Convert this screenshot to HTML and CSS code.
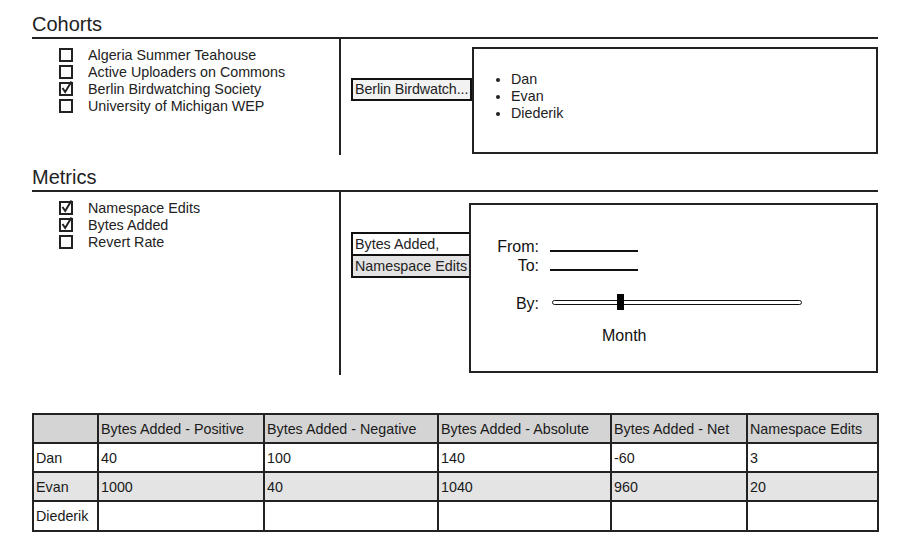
FILE: index.html
```html
<!DOCTYPE html>
<html lang="en">
<head>
  <meta charset="UTF-8">
  <meta name="viewport" content="width=device-width, initial-scale=1.0">
  <title>Cohort Metrics</title>
  <link rel="stylesheet" href="styles.css">
</head>
<body>
  <div class="page">

    <div class="panel cohorts">
      <h2>Cohorts</h2>
      <div class="panel-body">
        <ul class="checklist">
          <li><svg class="box" viewBox="0 0 15 16"><rect x="1" y="2" width="12" height="12"/></svg>Algeria Summer Teahouse</li>
          <li><svg class="box" viewBox="0 0 15 16"><rect x="1" y="2" width="12" height="12"/></svg>Active Uploaders on Commons</li>
          <li><svg class="box" viewBox="0 0 15 16"><rect x="1" y="2" width="12" height="12"/><path d="M3.5 7 L6.2 11 L12.5 0.5"/></svg>Berlin Birdwatching Society</li>
          <li><svg class="box" viewBox="0 0 15 16"><rect x="1" y="2" width="12" height="12"/></svg>University of Michigan WEP</li>
        </ul>
        <div class="panel-right">
          <div class="picked">Berlin Birdwatch...</div>
          <div class="detail">
            <ul class="members">
              <li>Dan</li>
              <li>Evan</li>
              <li>Diederik</li>
            </ul>
          </div>
        </div>
      </div>
    </div>

    <div class="panel metrics">
      <h2>Metrics</h2>
      <div class="panel-body">
        <ul class="checklist">
          <li><svg class="box" viewBox="0 0 15 16"><rect x="1" y="2" width="12" height="12"/><path d="M3.5 7 L6.2 11 L12.5 0.5"/></svg>Namespace Edits</li>
          <li><svg class="box" viewBox="0 0 15 16"><rect x="1" y="2" width="12" height="12"/><path d="M3.5 7 L6.2 11 L12.5 0.5"/></svg>Bytes Added</li>
          <li><svg class="box" viewBox="0 0 15 16"><rect x="1" y="2" width="12" height="12"/></svg>Revert Rate</li>
        </ul>
        <div class="panel-right">
          <div class="picked multi">
            <div class="opt">Bytes Added,</div>
            <div class="opt alt">Namespace Edits</div>
          </div>
          <div class="detail range">
            <div class="field-row first"><span class="label">From:</span><span class="blank"></span></div>
            <div class="field-row"><span class="label">To:</span><span class="blank"></span></div>
            <div class="field-row by">
              <span class="label">By:</span>
              <div class="slider"><div class="thumb"></div></div>
            </div>
            <div class="slider-value">Month</div>
          </div>
        </div>
      </div>
    </div>

    <table class="results">
      <colgroup>
        <col style="width:65px"><col style="width:166px"><col style="width:174px">
        <col style="width:173px"><col style="width:136px"><col style="width:131px">
      </colgroup>
      <tr class="head">
        <td></td>
        <td>Bytes Added - Positive</td>
        <td>Bytes Added - Negative</td>
        <td>Bytes Added - Absolute</td>
        <td>Bytes Added - Net</td>
        <td>Namespace Edits</td>
      </tr>
      <tr>
        <td>Dan</td><td>40</td><td>100</td><td>140</td><td>-60</td><td>3</td>
      </tr>
      <tr class="alt">
        <td>Evan</td><td>1000</td><td>40</td><td>1040</td><td>960</td><td>20</td>
      </tr>
      <tr>
        <td>Diederik</td><td></td><td></td><td></td><td></td><td></td>
      </tr>
    </table>

  </div>
</body>
</html>
```

FILE: styles.css
```css
body {
  font-family: "Liberation Sans", Arial, sans-serif;
  font-size: 14.3px;
  color: #222;
  background-color: #fff;
  margin: 0;
  padding: 0;
}
.page {
  width: 846px;
  padding: 13px 29px 20px 32px;
}
h2 {
  font-size: 20px;
  font-weight: normal;
  line-height: 23px;
  margin: 0;
  padding-bottom: 1px;
  border-bottom: 2px solid #222;
}
.metrics {
  margin-top: 11px;
}
.panel-body {
  display: flex;
}
.checklist {
  list-style: none;
  width: 280px;
  margin: 0;
  padding: 8px 0 0 27px;
  border-right: 2px solid #222;
}
.cohorts .checklist {
  height: 108px;
}
.metrics .checklist {
  height: 175px;
}
.checklist li {
  display: flex;
  align-items: center;
  line-height: 17px;
}
.box {
  width: 15px;
  height: 16px;
  margin-right: 14px;
  margin-top: -2px;
  fill: none;
  stroke: #222;
  stroke-width: 2;
}
.panel-right {
  display: flex;
  align-items: flex-start;
  padding-left: 10px;
}
.cohorts .panel-right {
  padding-top: 8px;
}
.metrics .panel-right {
  padding-top: 11px;
}
.picked {
  box-sizing: border-box;
  border: 2px solid #111;
  background-color: #f2f2f2;
  line-height: 19px;
  padding: 0 2px;
  white-space: nowrap;
  overflow: hidden;
}
.cohorts .picked {
  width: 121px;
  margin-top: 31px;
  letter-spacing: -0.1px;
}
.multi {
  width: 120px;
  margin-top: 29px;
  padding: 0;
  background-color: #fff;
}
.opt {
  padding: 0 2px;
  line-height: 20px;
}
.opt.alt {
  background-color: #e3e3e3;
  border-top: 2px solid #111;
}
.detail {
  box-sizing: border-box;
  border: 2px solid #222;
  background-color: #fff;
}
.cohorts .detail {
  width: 406px;
  height: 107px;
}
.members {
  margin: 0;
  padding: 22px 0 0 37px;
  line-height: 17px;
}
.range {
  width: 409px;
  height: 170px;
  margin-left: -2px;
  padding-top: 32px;
  font-size: 16px;
  color: #111;
}
.field-row {
  display: flex;
  align-items: baseline;
  line-height: 19px;
  margin-top: 0;
}
.label {
  width: 68px;
  text-align: right;
  margin-right: 11px;
}
.blank {
  display: inline-block;
  width: 88px;
  height: 10px;
  border-bottom: 2px solid #111;
}
.field-row.by {
  align-items: center;
  margin-top: 19px;
}
.slider {
  position: relative;
  box-sizing: border-box;
  width: 250px;
  height: 5px;
  margin-left: 2px;
  margin-top: -2px;
  border: 1px solid #111;
  border-radius: 3px;
  background-color: #fff;
}
.thumb {
  position: absolute;
  left: 64px;
  top: -7px;
  width: 7px;
  height: 16px;
  background-color: #000;
}
.slider-value {
  margin-top: 13px;
  margin-left: 131px;
  line-height: 19px;
}
.results {
  margin-top: 38px;
  width: 845px;
  border-collapse: collapse;
  table-layout: fixed;
  border: 2px solid #111;
}
.results td {
  height: 27px;
  padding: 0 2px;
  border: 2px solid #222;
  color: #1a1a1a;
  white-space: nowrap;
  overflow: hidden;
}
.results tr:last-child td {
  height: 28px;
}
.results .head td {
  background-color: #d4d4d4;
}
.results .alt td {
  background-color: #e4e4e4;
}
```
